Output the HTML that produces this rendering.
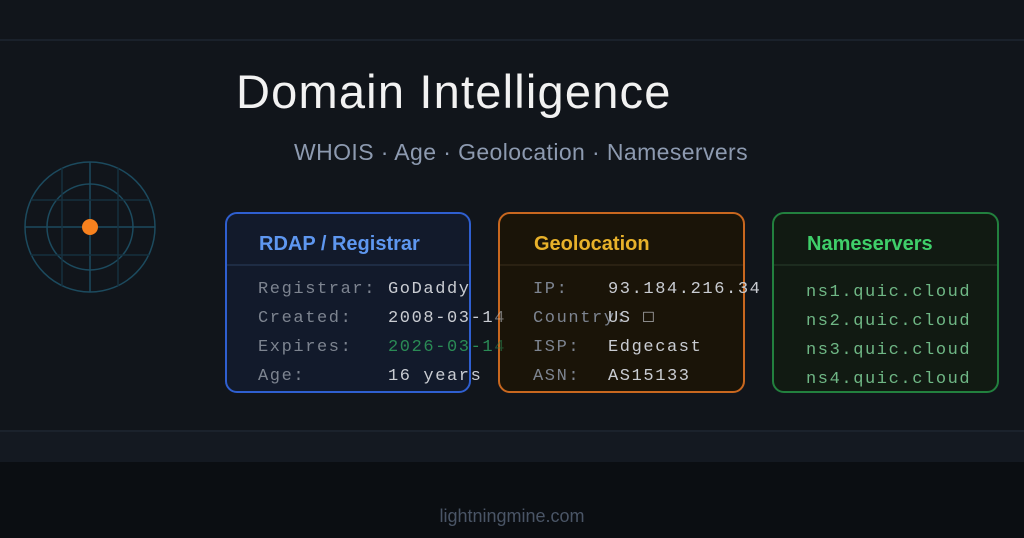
<!DOCTYPE html>
<html><head><style>
*{margin:0;padding:0;box-sizing:border-box}
body{width:1024px;height:538px;background:#11151b;position:relative;overflow:hidden;font-family:"Liberation Sans",sans-serif}
.line{position:absolute;left:0;width:1024px;height:2px;background:#1a212b}
.band{position:absolute;left:0;top:430px;width:1024px;height:32px;background:#141921;border-top:2px solid #1b222c}
.foot{position:absolute;left:0;top:462px;width:1024px;height:76px;background:#0b0e12}
.foot span{position:absolute;left:0;width:1024px;text-align:center;top:44px;color:#4a5566;font-size:18px}
h1{position:absolute;left:236px;top:64px;color:#f2f2f2;font-size:47px;font-weight:normal;letter-spacing:1.2px;font-family:"Liberation Sans",sans-serif}
.sub{position:absolute;left:294px;top:139px;color:#8d9ab0;font-size:23px;letter-spacing:0.4px}
.card{position:absolute;top:212px;height:181px;border:2.5px solid;border-radius:12px;overflow:visible}
.card .hd{height:52px;border-bottom:2px solid;font-weight:bold;font-size:20px;padding:19px 0 0 32px}
.row{position:absolute;font-family:"Liberation Mono",monospace;font-size:17px;letter-spacing:1.6px;color:#7d8490;white-space:nowrap}
.v{color:#c9ccd2}
</style></head><body>
<div class="line" style="top:39px"></div>
<div class="band"></div>
<div class="foot"><span>lightningmine.com</span></div>
<svg style="position:absolute;left:0;top:140px" width="200" height="180">
<g stroke="#1c4a5e" stroke-width="1.5" fill="none">
<circle cx="90" cy="87" r="65"/><circle cx="90" cy="87" r="43"/>
<line x1="90" y1="22" x2="90" y2="152"/><line x1="25" y1="87" x2="155" y2="87"/>
<line x1="62" y1="28" x2="62" y2="146" stroke="#16303e"/><line x1="118" y1="28" x2="118" y2="146" stroke="#16303e"/>
<line x1="31" y1="60" x2="149" y2="60" stroke="#16303e"/><line x1="31" y1="115" x2="149" y2="115" stroke="#16303e"/>
</g><circle cx="90" cy="87" r="8" fill="#f7811e"/></svg>
<h1>Domain Intelligence</h1>
<div class="sub">WHOIS · Age · Geolocation · Nameservers</div>

<div class="card" style="left:225px;width:246px;border-color:#2f5fd0;background:#121a2b"><div class="hd" style="color:#5e97f0;border-color:#1e2c44">RDAP / Registrar</div></div>
<div class="card" style="left:498px;width:247px;border-color:#c8671f;background:#1a1408"><div class="hd" style="color:#e8b12a;border-color:#2a2112;padding-left:34px">Geolocation</div></div>
<div class="card" style="left:772px;width:227px;border-color:#22803e;background:#111a12"><div class="hd" style="color:#3fcf6a;border-color:#1d2c1f;padding-left:33px">Nameservers</div></div>

<div class="row" style="left:258px;top:280px">Registrar:</div><div class="row v" style="left:388px;top:280px">GoDaddy</div>
<div class="row" style="left:258px;top:309px">Created:</div><div class="row v" style="left:388px;top:309px">2008-03-1<span style="opacity:.5">4</span></div>
<div class="row" style="left:258px;top:338px">Expires:</div><div class="row" style="left:388px;top:338px;color:#2a8a55">2026-03-1<span style="opacity:.5">4</span></div>
<div class="row" style="left:258px;top:367px">Age:</div><div class="row v" style="left:388px;top:367px">16 years</div>

<div class="row" style="left:533px;top:280px">IP:</div><div class="row v" style="left:608px;top:280px">93.184.216.34</div>
<div class="row" style="left:533px;top:309px">Country:</div><div class="row v" style="left:608px;top:309px">US □</div>
<div class="row" style="left:533px;top:338px">ISP:</div><div class="row v" style="left:608px;top:338px">Edgecast</div>
<div class="row" style="left:533px;top:367px">ASN:</div><div class="row v" style="left:608px;top:367px">AS15133</div>

<div class="row" style="left:806px;top:283px;color:#6fb785">ns1.quic.cloud</div>
<div class="row" style="left:806px;top:312px;color:#6fb785">ns2.quic.cloud</div>
<div class="row" style="left:806px;top:341px;color:#6fb785">ns3.quic.cloud</div>
<div class="row" style="left:806px;top:370px;color:#6fb785">ns4.quic.cloud</div>
</body></html>
